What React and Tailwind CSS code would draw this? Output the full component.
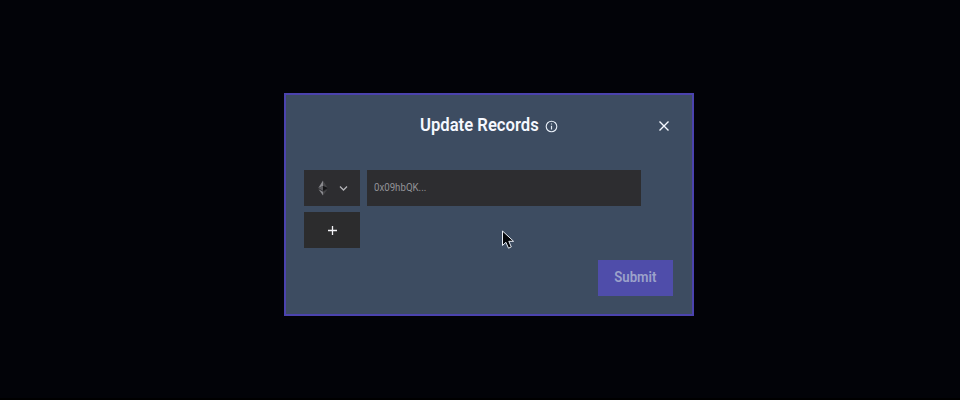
export default function App() {
  return (
    <div className="relative flex h-[400px] w-[960px] items-start overflow-hidden border-b-2 border-black bg-[#020308] pl-[284px] pt-[92.5px] font-['Roboto',sans-serif]">
      <section className="flex h-[223px] w-[410px] flex-col border-2 border-[#4b43ae] bg-[#3d4c61] px-[18px]">
        <header className="flex h-[60px] items-center pl-[116px] pt-[1px]">
          <h1 className="w-[119px] origin-left scale-x-[0.925] whitespace-nowrap text-[18px] font-semibold leading-6 text-[#f5f8ff]">
            Update Records
          </h1>
          <svg className="ml-[6px] mt-[2px] size-[13px] text-[#e6edf6]" viewBox="0 0 13 13" fill="none" stroke="currentColor">
            <circle cx="6.5" cy="6.5" r="5.3" strokeWidth="1.1" />
            <path d="M6.5 5.8v3.7M6.5 3.4v1.2" strokeWidth="1.2" />
          </svg>
          <button type="button" aria-label="Close" className="ml-auto mr-[4px] mt-[2px] text-[#f5f8ff]">
            <svg className="size-[12px]" viewBox="0 0 12 12" fill="none" stroke="currentColor" strokeWidth="1.4">
              <path d="M1.5 1.5l9 9M10.5 1.5l-9 9" />
            </svg>
          </button>
        </header>

        <div className="mt-[15.5px] flex gap-[7px]">
          <button type="button" aria-label="Ethereum" className="flex h-9 w-14 items-center bg-[#2d2d30] pl-[13px]">
            <svg className="h-[16px] w-[12px]" viewBox="0 0 12 16">
              <path d="M6 0.5L1.3 8 6 6z" fill="#8a8a8e" />
              <path d="M6 0.5L10.7 8 6 6z" fill="#464649" />
              <path d="M1.3 8L6 6v4.7z" fill="#5c5c60" />
              <path d="M10.7 8L6 6v4.7z" fill="#141416" />
              <path d="M1.5 9.2L6 11.8v3.7z" fill="#8a8a8e" />
              <path d="M10.5 9.2L6 11.8v3.7z" fill="#464649" />
            </svg>
            <svg className="ml-[10px] size-[9px] text-[#b4b4b8]" viewBox="0 0 9 9" fill="none" stroke="currentColor" strokeWidth="1.3">
              <path d="M1 2.5l3.5 3.5L8 2.5" />
            </svg>
          </button>
          <div className="flex h-9 w-[274px] items-center bg-[#2d2d30] pl-[7px]">
            <span className="origin-left scale-x-[0.88] text-[11px] leading-4 text-[#929297]">0x09hbQK...</span>
          </div>
        </div>
        <button type="button" aria-label="Add record" className="mt-[5.5px] flex h-9 w-14 items-center justify-center bg-[#2c2c2d] pt-px text-[#f4f4f8]">
          <svg className="size-[11px]" viewBox="0 0 11 11" fill="none" stroke="currentColor" strokeWidth="1.3">
            <path d="M5.5 1v9M1 5.5h9" />
          </svg>
        </button>
        <button type="button" className="ml-auto mr-[1px] mt-[12px] flex h-9 w-[75px] items-center justify-center bg-[#4f4daa] text-[14px] font-semibold text-[#9ca2ca]">
          <span className="scale-x-[0.94]">Submit</span>
        </button>
      </section>
      <svg className="absolute left-[501px] top-[230px] h-[20px] w-[14px]" viewBox="0 0 14 20">
        <path d="M1.5 1v14.5l3.4-3.2 2.6 5.9 2.8-1.3-2.5-5.6h4.8z" fill="#05070b" stroke="#e9eef5" strokeWidth="1" />
      </svg>
    </div>
  );
}
